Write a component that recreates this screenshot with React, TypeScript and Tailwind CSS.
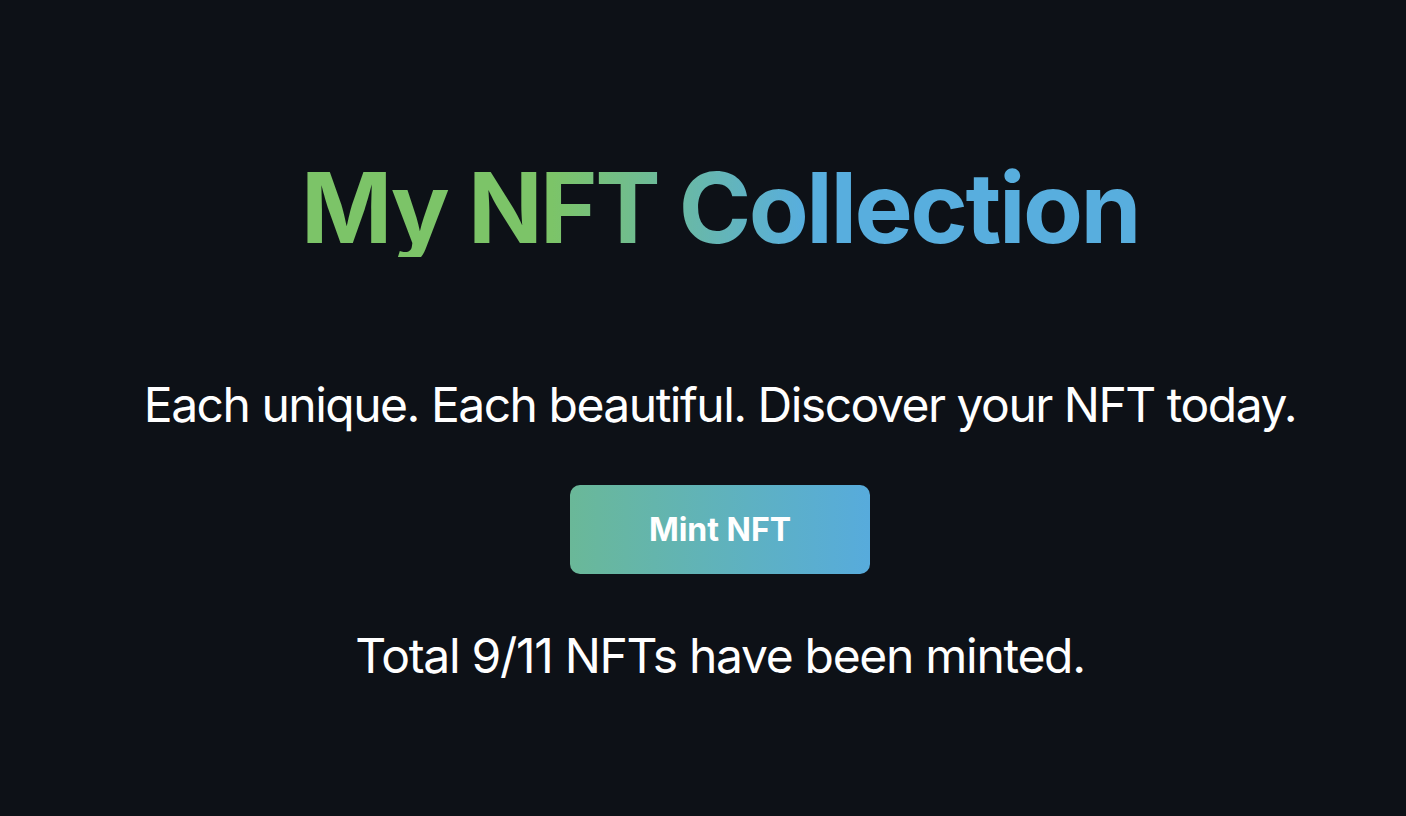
import React from 'react'

const App = () => {
    const minted = 9
    const total = 11

    return (
        <div className="min-h-screen w-full bg-[#0d1117] flex flex-col items-center pt-[159px] pl-[34px] text-white font-['Inter','Liberation_Sans',sans-serif]">
            {/* header */}
            <h1 className="text-[98px] leading-none font-bold tracking-[-2.5px] bg-[linear-gradient(90deg,#7cc468_30%,#58aede_60%)] bg-clip-text text-transparent">
                My NFT Collection
            </h1>
            <p className="mt-[124px] text-[48px] leading-none tracking-[-1.5px]">
                Each unique. Each beautiful. Discover your NFT today.
            </p>

            {/* mint button */}
            <button className="mt-[56px] w-[300px] h-[89px] rounded-[10px] bg-gradient-to-r from-[#6ab898] to-[#57abdc] text-[32px] font-bold text-white">
                Mint NFT
            </button>

            <p className="mt-[58px] text-[48px] leading-none tracking-[-1.3px]">
                Total {minted}/{total} NFTs have been minted.
            </p>
        </div>
    )
}

export default App
